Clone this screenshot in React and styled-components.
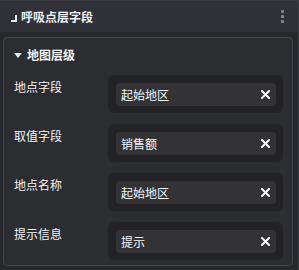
import React from 'react';
import styled, { createGlobalStyle } from 'styled-components';

const GlobalStyle = createGlobalStyle`
  html, body {
    margin: 0;
    padding: 0;
    background: #27282c;
  }
  body {
    font-family: "Noto Sans CJK SC", "Noto Sans", sans-serif;
    color: #ffffff;
  }
`;

const Frame = styled.div`
  width: 298px;
  height: 270px;
  background: #27282c;
  border-right: 1px solid #3a3b40;
  overflow: hidden;
`;

const Header = styled.div`
  height: 32px;
  display: flex;
  align-items: center;
  padding: 0 10px;
  background: #313237;
  border-top: 1px solid #3a3b40;
  box-sizing: border-box;
`;

const CornerMark = styled.span`
  width: 4px;
  height: 5px;
  border-right: 2px solid #e6ecf5;
  border-bottom: 2px solid #e6ecf5;
  margin: 4px 4px 0 1px;
`;

const Title = styled.div`
  flex: 1;
  font-size: 12px;
  font-weight: 700;
  color: #eef0f4;
`;

const Dots = styled.div`
  display: flex;
  flex-direction: column;
  gap: 2px;
  margin-right: 4px;
  span {
    width: 3px;
    height: 3px;
    border-radius: 1px;
    background: #7d8796;
  }
`;

const Panel = styled.section`
  margin: 5px 5px 0 3px;
  height: 229px;
  box-sizing: border-box;
  background: #2c2d31;
  border: 1px solid #46474c;
  border-radius: 4px;
  padding: 0 9px 0 10px;
`;

const SectionHead = styled.div`
  height: 37px;
  box-sizing: border-box;
  padding-bottom: 4px;
  display: flex;
  align-items: center;
  gap: 5px;
  font-size: 12px;
  font-weight: 700;
  color: #f2f4f8;
`;

const Caret = styled.span`
  width: 0;
  height: 0;
  border-left: 4px solid transparent;
  border-right: 4px solid transparent;
  border-top: 5px solid #e8edf5;
  margin-top: 1px;
`;

const Rows = styled.div`
  display: flex;
  flex-direction: column;
  gap: 11px;
`;

const Row = styled.div`
  display: flex;
  align-items: flex-start;
`;

const Label = styled.div`
  width: 94px;
  padding-top: 3px;
  font-size: 12px;
  line-height: 17px;
  color: #f0f2f6;
`;

const Field = styled.div`
  flex: 1;
  height: 38px;
  box-sizing: border-box;
  background: #232326;
  border-radius: 6px;
  padding: 8px 7px 7px 8px;
`;

const Tag = styled.div`
  height: 23px;
  display: flex;
  align-items: center;
  justify-content: space-between;
  background: #333336;
  border-radius: 4px;
  padding: 0 6px 0 5px;
  font-size: 12px;
  color: #f4f6fa;
`;

const Clear = () => (
  <svg width="9" height="9" viewBox="0 0 9 9">
    <path d="M1 1L8 8M8 1L1 8" stroke="#f4f7fb" strokeWidth="2" strokeLinecap="square" />
  </svg>
);

const fields = [
  { label: '地点字段', value: '起始地区' },
  { label: '取值字段', value: '销售额' },
  { label: '地点名称', value: '起始地区' },
  { label: '提示信息', value: '提示' },
];

export default function App() {
  return (
    <>
      <GlobalStyle />
      <Frame>
        <Header>
          <CornerMark />
          <Title>呼吸点层字段</Title>
          <Dots>
            <span />
            <span />
            <span />
          </Dots>
        </Header>
        <Panel>
          <SectionHead>
            <Caret />
            地图层级
          </SectionHead>
          <Rows>
            {fields.map((f) => (
              <Row key={f.label}>
                <Label>{f.label}</Label>
                <Field>
                  <Tag>
                    {f.value}
                    <Clear />
                  </Tag>
                </Field>
              </Row>
            ))}
          </Rows>
        </Panel>
      </Frame>
    </>
  );
}
